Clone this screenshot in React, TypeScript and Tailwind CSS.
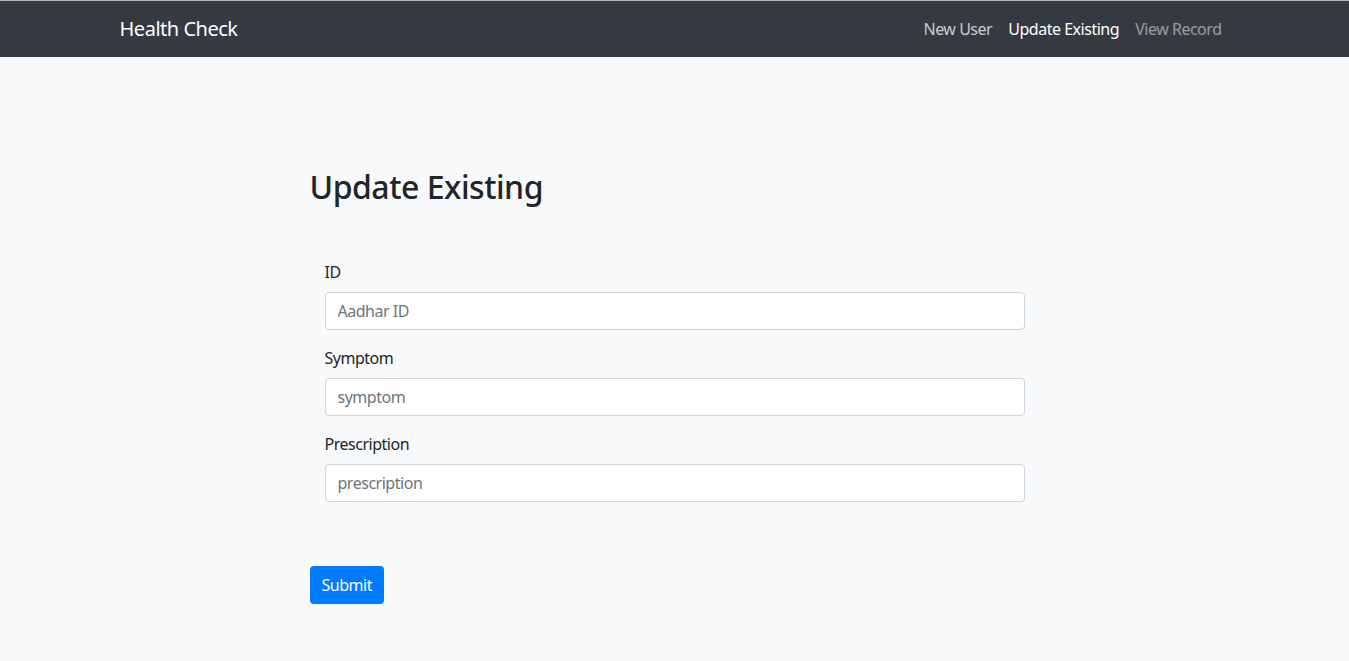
export default function App() {
  return (
    <div className="min-h-screen bg-[#f8f9fa] font-['Noto_Sans',sans-serif] tracking-[-0.03em] text-[#212529]">
      <div className="h-px bg-[#b9b9b9]" />
      {/* Navbar */}
      <nav className="h-[56px] bg-[#343a40]">
        <div className="mx-auto flex h-full w-[1140px] items-center justify-between px-[15px]">
          <a href="#" className="text-[20px] leading-[30px] text-white">
            Health Check
          </a>
          <div className="flex items-center text-[16px] leading-6">
            <a href="#" className="px-2 text-white/75">New User</a>
            <a href="#" className="px-2 text-white">Update Existing</a>
            <a href="#" className="px-2 text-white/50">View Record</a>
          </div>
        </div>
      </nav>

      <main className="mx-auto w-[730px] pt-[111px] pb-14">
        <h2 className="text-[32px] font-medium leading-[38px]">Update Existing</h2>

        <form className="mt-[54px]" onSubmit={(e) => e.preventDefault()}>
          <div className="px-[15px]">
            {[
              { label: 'ID', placeholder: 'Aadhar ID' },
              { label: 'Symptom', placeholder: 'symptom' },
              { label: 'Prescription', placeholder: 'prescription' },
            ].map((f) => (
              <div key={f.label} className="mb-4">
                <label className="mb-2 block text-[16px] leading-6">{f.label}</label>
                <input
                  type="text"
                  placeholder={f.placeholder}
                  className="block h-[38px] w-full rounded-[4px] border border-[#ced4da] bg-white px-3 text-[16px] tracking-[-0.03em] text-[#495057] placeholder:text-[#6c757d] outline-none"
                />
              </div>
            ))}
          </div>

          <button
            type="submit"
            className="mt-[48px] h-[38px] rounded-[4px] bg-[#007bff] px-3 text-[16px] leading-6 tracking-[-0.03em] text-white"
          >
            Submit
          </button>
        </form>
      </main>
    </div>
  );
}
